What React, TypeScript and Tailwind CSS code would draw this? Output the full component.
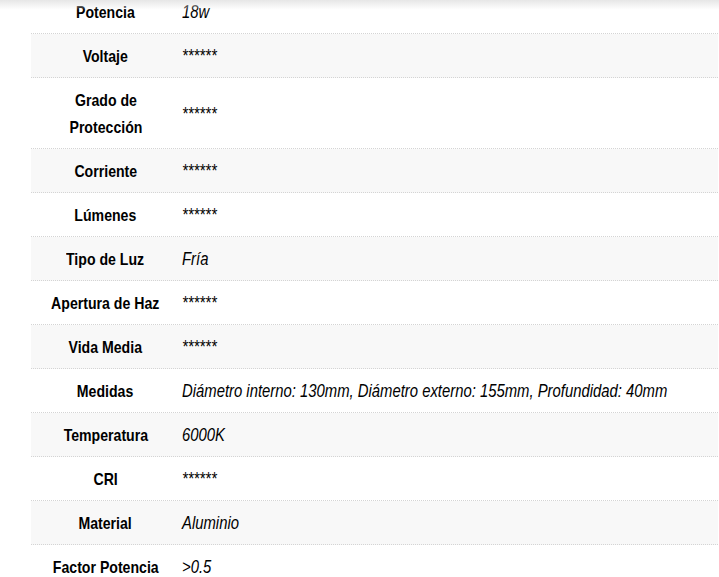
import { Fragment } from 'react';

const SPECS: { label: string[]; value: string }[] = [
  { label: ['Potencia'], value: '18w' },
  { label: ['Voltaje'], value: '******' },
  { label: ['Grado de', 'Protección'], value: '******' },
  { label: ['Corriente'], value: '******' },
  { label: ['Lúmenes'], value: '******' },
  { label: ['Tipo de Luz'], value: 'Fría' },
  { label: ['Apertura de Haz'], value: '******' },
  { label: ['Vida Media'], value: '******' },
  { label: ['Medidas'], value: 'Diámetro interno: 130mm, Diámetro externo: 155mm, Profundidad: 40mm' },
  { label: ['Temperatura'], value: '6000K' },
  { label: ['CRI'], value: '******' },
  { label: ['Material'], value: 'Aluminio' },
  { label: ['Factor Potencia'], value: '>0.5' },
];

// no narrow font available, so squeeze Liberation Sans to Arial Narrow proportions
export default function App() {
  return (
    <div
      className="relative w-[719px] h-[577px] overflow-hidden bg-white text-black"
      style={{ fontFamily: '"Liberation Sans", Arial, sans-serif' }}
    >
      <div className="absolute top-0 left-0 right-0 h-[10px] bg-gradient-to-b from-[#e6e6e6] to-transparent z-10" />
      <div className="mt-[-10px] ml-[31px] mr-[1px]">
        {SPECS.map((s, i) => (
          <div
            key={s.label.join(' ')}
            className={`flex items-center border-b border-dotted border-[#d4d4d4] pt-[9px] pb-[7px] ${i % 2 ? 'bg-[#f8f8f8]' : 'bg-white'}`}
          >
            <div className="w-[149px] shrink-0 text-center text-[17px] leading-[27px] font-bold whitespace-nowrap">
              <span className="inline-block scale-x-[0.83]">
                {s.label.map((l, j) => (
                  <Fragment key={l}>
                    {j > 0 && <br />}
                    {l}
                  </Fragment>
                ))}
              </span>
            </div>
            <div className="pl-[2px] min-w-0 text-[18px] leading-[27px] italic whitespace-nowrap">
              <span className="inline-block origin-left scale-x-[0.825]">{s.value}</span>
            </div>
          </div>
        ))}
      </div>
    </div>
  );
}
